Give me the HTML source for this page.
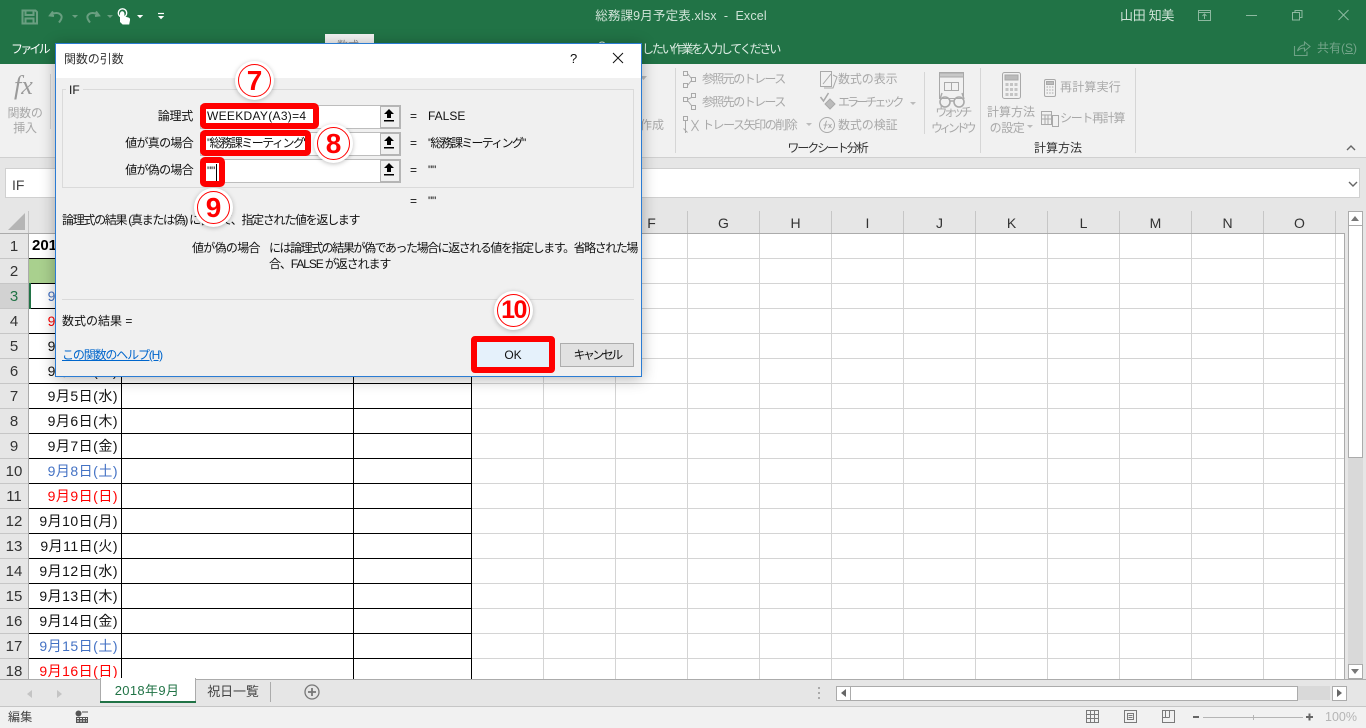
<!DOCTYPE html>
<html lang="ja"><head><meta charset="utf-8"><title>総務課9月予定表.xlsx - Excel</title>
<style>
html,body{margin:0;padding:0;width:1366px;height:728px;overflow:hidden;background:#fff}
body{position:relative;font-family:"Liberation Sans","Noto Sans CJK JP",sans-serif;font-size:12px;color:#222}
div,span.a{position:absolute}
.t{position:absolute;white-space:nowrap;line-height:16px;height:16px}
.g{color:#a8a8a8;font-size:12px;letter-spacing:-.3px}
.w{color:#dfeee5;letter-spacing:-.5px}
.c{text-align:center;transform:translateX(-50%)}
.r{text-align:right;transform:translateX(-100%)}
.h{position:absolute;top:211px;height:22px;line-height:24px;width:72px;text-align:center;font-size:14px;color:#333;border-right:1px solid #c6c6c6;box-sizing:border-box}
.n{position:absolute;left:0;width:28px;height:25px;line-height:25px;text-align:center;font-size:15px;color:#333;border-bottom:1px solid #c6c6c6;box-sizing:border-box;background:#e6e6e6}
.d{position:absolute;width:108px;left:10px;height:24px;line-height:25px;text-align:right;font-size:14px;letter-spacing:.5px;color:#111;white-space:nowrap}
.bl{color:#4472c4}.rd{color:#f00}
.lab{position:absolute;white-space:nowrap;line-height:16px;font-size:12px;color:#111;letter-spacing:-.25px}
.inp{position:absolute;left:200px;width:198px;height:22px;background:#fff;border:1px solid #bdbdbd;box-sizing:content-box}
.ref{position:absolute;left:380px;width:18px;height:20px;background:#f0f0f0;border:2px solid #b5b5b5;border-width:2px 2px 2px 1px;box-sizing:content-box}
.hl{position:absolute;left:200px;background:#fff;border:6px solid #f00;border-radius:5px;box-sizing:border-box;overflow:hidden}
.hl span{position:absolute;left:1px;white-space:nowrap;font-size:12px;line-height:16px;color:#111;letter-spacing:-.25px}
.circ{position:absolute;width:31px;height:31px;border-radius:50%;background:#fff;border:1.500px solid #f00;box-shadow:0 0 0 3px #fff,0 1px 5px 3px rgba(0,0,0,.25);text-align:center;color:#f00;font-weight:700;font-size:28px;line-height:31px;box-sizing:content-box}
svg{position:absolute;overflow:visible}
</style></head><body>

<!-- title bar -->
<div style="left:0;top:0;width:1366px;height:64px;background:#217346"></div>
<svg style="left:0;top:0" width="340" height="32" fill="none">
 <g stroke="#6a9f81" stroke-width="2">
  <path d="M22.500 10.500h13l1.500 1.500v11.500h-14.500z"/><path d="M25.500 10.500v4.500h8v-4.500M25.500 23.500v-5h8v5"/>
  <path d="M53 11.500l-3 4 4 .5M50.500 16c3-4 9-4 11 0 .8 2-.5 4-2.500 6.500"/>
  <path d="M96 11.500l3 4-4 .5M98.500 16c-3-4-9-4-11 0-.8 2 .5 4 2.500 6.500"/>
 </g>
 <path d="M72 15l3 3 3-3zM107 15l3 3 3-3z" fill="#6a9f81"/>
 <path d="M120 22v-8.500a2.200 2.200 0 0 1 4.400 0v3l4 1c1.500 .4 1.800 1.400 1.600 2.800l-.8 4.200h-6.600z" fill="#fff"/>
 <circle cx="122.500" cy="13" r="4.200" stroke="#fff" stroke-width="1.400"/>
 <path d="M137 15l3 3.200 3.200-3.200z" fill="#fff"/>
 <path d="M158 13.500h6" stroke="#fff" stroke-width="1.200"/><path d="M158 16l3 3.200 3.200-3.200z" fill="#fff"/>
</svg>
<div class="t w c" style="left:681px;top:8px;font-size:12.500px;letter-spacing:.15px;color:#cfe3d7">総務課9月予定表.xlsx&nbsp; - &nbsp;Excel</div>
<div class="t" style="left:1120px;top:8px;font-size:13px;letter-spacing:-.3px;color:#cfe3d7">山田 知美</div>
<svg style="left:1190px;top:0" width="176" height="64" fill="none" stroke="#8db9a0" stroke-width="1">
 <path d="M8.500 10.500h12v10h-12zM8.500 12.500h12M14.500 19v-5M12.500 16l2-2 2 2"/>
 <path d="M56 15.500h11"/>
 <path d="M102.500 12.500h7v7.500h-7zM105 12.500v-2h7v7h-2.500"/>
 <path d="M148.500 10l10 10M158.500 10l-10 10"/>
</svg>
<div class="t w" style="left:11px;top:41px;font-size:12px;color:#fff;letter-spacing:-2.800px">ファイル</div>
<div style="left:325px;top:34px;width:49px;height:30px;background:#f1f1f1"></div>
<div class="t" style="left:337px;top:38px;color:#888;font-size:11px">数式</div>
<svg style="left:595px;top:40px" width="14" height="14" fill="none" stroke="#cfe3d7"><circle cx="7" cy="5.500" r="3.500"/><path d="M5.500 10.500h3"/></svg>
<div class="t w" style="left:642px;top:41px;font-size:12px;letter-spacing:-2.150px">したい作業を入力してください</div>
<svg style="left:1293px;top:40px" width="18" height="17" fill="none" stroke="#6fa286" stroke-width="1.100"><path d="M1.500 6v9.500h12.500v-4M4.500 11c1-4 4-6 7-6V2l5.500 4.500-5.500 4.500V8c-3 0-5 .5-7 3z"/></svg>
<div class="t" style="left:1317px;top:40px;font-size:12px;color:#74a58a">共有(<u>S</u>)</div>

<!-- ribbon -->
<div style="left:0;top:64px;width:1366px;height:93px;background:#f1f1f1;border-bottom:1px solid #d0d0d0;box-sizing:content-box"></div>
<div class="t" style="left:14px;top:71px;font:italic 26px/30px 'Liberation Serif',serif;color:#9a9a9a">fx</div>
<div class="t g c" style="left:25px;top:105px">関数の</div>
<div class="t g c" style="left:25px;top:120px">挿入</div>
<div style="left:50px;top:74px;width:1px;height:55px;background:#d6d6d6"></div>
<div class="t g" style="left:640px;top:117px;letter-spacing:0">作成</div>
<svg style="left:640px;top:76px" width="8" height="5"><path d="M0 0h7l-3.500 4z" fill="#bbb"/></svg>
<div style="left:675px;top:68px;width:1px;height:85px;background:#d6d6d6"></div>
<div style="left:924px;top:72px;width:1px;height:62px;background:#d6d6d6"></div>
<div style="left:980px;top:68px;width:1px;height:85px;background:#d6d6d6"></div>
<div style="left:1135px;top:68px;width:1px;height:85px;background:#d6d6d6"></div>

<svg style="left:680px;top:68px" width="470" height="80" fill="none" stroke="#a9a9a9" stroke-width="1">
 <path d="M3.500 3.500h4v4h-4zM3.500 15.500h4v4h-4zM11.500 9.500h4v4h-4zM7.500 5.500l4 5M7.500 17.500l4-5"/>
 <path d="M3.500 29.500h4v4h-4zM11.500 25.500h4v4h-4zM11.500 37.500h4v4h-4zM7.500 31.500l4-2M7.500 32.500l4 5"/>
 <path d="M3.500 48.500h4v4h-4zM3.500 60.500l4 4M11.500 52l7 11M18.500 52l-7 11M5.500 53v12"/>
 <path d="M140.500 3.500h11v15h-11zM143 16l8-10M153 7l4 2-4 11h-9"/>
 <path d="M140.500 29l3 4 5-8" stroke-width="1.500"/><path d="M150 31l5 5-5 5-5-5z" fill="#bbb"/>
 <circle cx="147" cy="57" r="7.500"/><path d="M144 61c2 0 1-8 3-8M143.500 57h4M148.500 56l3 4M151.500 56l-3 4"/>
 <path d="M259.500 4.500h24v26h-24z"/><path d="M259.500 5h24v4h-24z" fill="#c8c8c8"/><path d="M264.500 14.500h14v8h-14zM271.500 14.500v8"/>
 <circle cx="265" cy="34" r="5" stroke-width="1.600"/><circle cx="279" cy="34" r="5" stroke-width="1.600"/><path d="M270 33h4M260 31l2-6M284 31l-2-6" stroke-width="1.400"/>
 <rect x="322.500" y="4.500" width="18" height="26" rx="2"/><path d="M325 7h13v5h-13z" fill="#bbb"/>
 <path d="M325.500 15h3v3h-3zM330 15h3v3h-3zM334.500 15h3v3h-3zM325.500 20h3v3h-3zM330 20h3v3h-3zM334.500 20h3v3h-3zM325.500 25h3v3h-3zM330 25h3v3h-3zM334.500 25h3v3h-3z" fill="#c4c4c4" stroke="none"/>
 <rect x="364.500" y="11.500" width="11" height="17" rx="1.500"/><path d="M366.500 13.500h7v3h-7z" fill="#bbb"/><path d="M366.500 19h7M366.500 22h7M366.500 25h7" stroke-dasharray="1.500 1.200"/>
 <path d="M361.500 43.500h10v13h-10zM361.500 47h10M361.500 51h10M365 47v9M368 47v9"/><rect x="372.500" y="47.500" width="6" height="11"/>
</svg>
<div class="t g" style="left:702px;top:71px;letter-spacing:-1.600px">参照元のトレース</div>
<div class="t g" style="left:702px;top:94px;letter-spacing:-1.600px">参照先のトレース</div>
<div class="t g" style="left:702px;top:117px;letter-spacing:-1.450px">トレース矢印の削除</div>
<div class="t g" style="left:838px;top:71px;letter-spacing:-.1px">数式の表示</div>
<div class="t g" style="left:838px;top:94px;letter-spacing:-3px">エラー チェック</div>
<div class="t g" style="left:838px;top:117px;letter-spacing:-.1px">数式の検証</div>
<svg style="left:806px;top:100px" width="120" height="30"><path d="M0 23h6l-3 3zM104 2h6l-3 3z" fill="#bbb"/></svg>
<div class="t g c" style="left:952px;top:104px;letter-spacing:-3.600px">ウォッチ</div>
<div class="t g c" style="left:952px;top:120px;letter-spacing:-3.600px">ウィンドウ</div>
<div class="t g c" style="left:1011px;top:104px;letter-spacing:0">計算方法</div>
<div class="t g c" style="left:1007px;top:120px;letter-spacing:-.4px">の設定</div>
<svg style="left:1027px;top:125px" width="8" height="5"><path d="M0 0h6l-3 3z" fill="#bbb"/></svg>
<div class="t g" style="left:1060px;top:79px;letter-spacing:.2px">再計算実行</div>
<div class="t g" style="left:1060px;top:110px;letter-spacing:-1.300px">シート再計算</div>
<div class="t c" style="left:827px;top:140px;color:#333;letter-spacing:-2.100px">ワークシート分析</div>
<div class="t c" style="left:1058px;top:140px;color:#333;letter-spacing:0">計算方法</div>
<svg style="left:1346px;top:145px" width="10" height="7" fill="none" stroke="#666" stroke-width="1.400"><path d="M1 5l4-4 4 4"/></svg>

<!-- formula bar -->
<div style="left:0;top:158px;width:1366px;height:53px;background:#e6e6e6"></div>
<div style="left:5px;top:168px;width:1355px;height:30px;background:#fff;border:1px solid #d0d0d0;box-sizing:border-box"></div>
<div class="t" style="left:12px;top:177px;font-size:14px;color:#444">IF</div>
<svg style="left:1348px;top:181px" width="10" height="6" fill="none" stroke="#666" stroke-width="1.400"><path d="M1 1l4 4 4-4"/></svg>

<!-- column header -->
<div style="left:0;top:205px;width:1345px;height:29px;background:#e6e6e6"></div>
<div style="left:0;top:211px;width:28px;height:22px;background:#e6e6e6;border-right:1px solid #c6c6c6"></div>
<svg style="left:8px;top:213px" width="18" height="18"><path d="M17 0v17H0z" fill="#b5b5b5"/></svg>
<div class="h" style="left:616px">F</div><div class="h" style="left:688px">G</div><div class="h" style="left:760px">H</div><div class="h" style="left:832px">I</div><div class="h" style="left:904px">J</div><div class="h" style="left:976px">K</div><div class="h" style="left:1048px">L</div><div class="h" style="left:1120px">M</div><div class="h" style="left:1192px">N</div><div class="h" style="left:1264px">O</div>
<div style="left:0;top:233px;width:1345px;height:1px;background:#ababab"></div>

<!-- grid -->
<div style="left:29px;top:234px;width:1315px;height:445px;background-color:#fff;background-image:repeating-linear-gradient(to bottom,transparent 0,transparent 24px,#d4d4d4 24px,#d4d4d4 25px)"></div>
<svg style="left:0;top:234px" width="1345" height="445">
 <g stroke="#d4d4d4"><path d="M471.500 0v445M543.500 0v445M615.500 0v445M687.500 0v445M759.500 0v445M831.500 0v445M903.500 0v445M975.500 0v445M1047.500 0v445M1119.500 0v445M1191.500 0v445M1263.500 0v445M1335.500 0v445"/></g>
 <path d="M1344.500 0v445" stroke="#ababab"/>
</svg>
<div style="left:29px;top:259px;width:442px;height:24px;background:#a9d08e"></div>
<svg style="left:0;top:234px" width="480" height="445" stroke="#000" stroke-width="1">
 <path d="M29 24.500h443M29 49.500h443M29 74.500h443M29 99.500h443M29 124.500h443M29 149.500h443M29 174.500h443M29 199.500h443M29 224.500h443M29 249.500h443M29 274.500h443M29 299.500h443M29 324.500h443M29 349.500h443M29 374.500h443M29 399.500h443M29 424.500h443"/>
 <path d="M121.500 24v421M353.500 24v421M471.500 24v421"/>
</svg>
<div style="left:28px;top:283px;width:3px;height:26px;background:#217346"></div>
<div class="t" style="left:32px;top:238px;font-size:15px;font-weight:700;color:#000">2018年9月</div>

<!-- row headers -->
<div class="n" style="top:234px">1</div><div class="n" style="top:259px">2</div><div class="n" style="top:284px;background:#d2d2d2;color:#217346">3</div><div class="n" style="top:309px">4</div><div class="n" style="top:334px">5</div><div class="n" style="top:359px">6</div><div class="n" style="top:384px">7</div><div class="n" style="top:409px">8</div><div class="n" style="top:434px">9</div><div class="n" style="top:459px">10</div><div class="n" style="top:484px">11</div><div class="n" style="top:509px">12</div><div class="n" style="top:534px">13</div><div class="n" style="top:559px">14</div><div class="n" style="top:584px">15</div><div class="n" style="top:609px">16</div><div class="n" style="top:634px">17</div><div class="n" style="top:659px;height:20px;border:0">18</div>
<div style="left:28px;top:234px;width:1px;height:445px;background:#ababab"></div>

<!-- dates -->
<div class="d bl" style="top:284px">9月1日(土)</div>
<div class="d rd" style="top:309px">9月2日(日)</div>
<div class="d" style="top:334px">9月3日(月)</div>
<div class="d" style="top:359px">9月4日(火)</div>
<div class="d" style="top:384px">9月5日(水)</div>
<div class="d" style="top:409px">9月6日(木)</div>
<div class="d" style="top:434px">9月7日(金)</div>
<div class="d bl" style="top:459px">9月8日(土)</div>
<div class="d rd" style="top:484px">9月9日(日)</div>
<div class="d" style="top:509px">9月10日(月)</div>
<div class="d" style="top:534px">9月11日(火)</div>
<div class="d" style="top:559px">9月12日(水)</div>
<div class="d" style="top:584px">9月13日(木)</div>
<div class="d" style="top:609px">9月14日(金)</div>
<div class="d bl" style="top:634px">9月15日(土)</div>
<div class="d rd" style="top:659px;height:20px;overflow:hidden">9月16日(日)</div>

<!-- right scrollbar -->
<div style="left:1345px;top:205px;width:21px;height:474px;background:#e6e6e6"></div>
<div style="left:1348px;top:211px;width:15px;height:468px;background:#d9d9d9"></div>
<div style="left:1348px;top:211px;width:15px;height:15px;background:#fff;border:1px solid #ababab;box-sizing:border-box"></div>
<svg style="left:1351px;top:216px" width="9" height="5"><path d="M0 5h8L4 0z" fill="#777"/></svg>
<div style="left:1348px;top:225px;width:15px;height:233px;background:#fff;border:1px solid #ababab;box-sizing:border-box"></div>
<div style="left:1348px;top:664px;width:15px;height:15px;background:#fff;border:1px solid #ababab;box-sizing:border-box"></div>
<svg style="left:1351px;top:669px" width="9" height="5"><path d="M0 0h8L4 5z" fill="#777"/></svg>

<!-- sheet tabs -->
<div style="left:0;top:679px;width:1366px;height:27px;background:#e6e6e6;border-top:1px solid #ababab;box-sizing:border-box"></div>
<svg style="left:26px;top:690px" width="36" height="9"><path d="M6 0v8L1 4zM31 0v8l5-4z" fill="#c4c4c4"/></svg>
<div style="left:100px;top:678px;width:96px;height:25px;background:#fff;border:1px solid #ababab;border-top:0;border-bottom:0;box-sizing:border-box"></div>
<div style="left:100px;top:701px;width:96px;height:2px;background:#217346"></div>
<div class="t c" style="left:147px;top:683px;font-size:13px;color:#217346;letter-spacing:.35px">2018年9月</div>
<div class="t c" style="left:233px;top:684px;font-size:13px;color:#444;letter-spacing:-.1px">祝日一覧</div>
<div style="left:270px;top:682px;width:1px;height:20px;background:#ababab"></div>
<svg style="left:304px;top:684px" width="16" height="16" fill="none" stroke="#777" stroke-width="1.300"><circle cx="8" cy="8" r="7"/><path d="M8 4v8M4 8h8" stroke-width="1.800"/></svg>
<svg style="left:818px;top:687px" width="4" height="14"><path d="M0 0h2v2H0zM0 5h2v2H0zM0 10h2v2H0z" fill="#aaa"/></svg>
<div style="left:836px;top:686px;width:494px;height:14px;background:#d9d9d9"></div>
<div style="left:836px;top:686px;width:15px;height:15px;background:#fff;border:1px solid #ababab;box-sizing:border-box"></div>
<svg style="left:841px;top:689px" width="5" height="9"><path d="M5 0v8L0 4z" fill="#666"/></svg>
<div style="left:850px;top:686px;width:448px;height:15px;background:#fff;border:1px solid #ababab;box-sizing:border-box"></div>
<div style="left:1332px;top:686px;width:15px;height:15px;background:#fff;border:1px solid #ababab;box-sizing:border-box"></div>
<svg style="left:1337px;top:689px" width="5" height="9"><path d="M0 0v8l5-4z" fill="#666"/></svg>

<!-- status bar -->
<div style="left:0;top:706px;width:1366px;height:22px;background:#f1f1f1;border-top:1px solid #c6c6c6;box-sizing:border-box"></div>
<div class="t" style="left:8px;top:709px;color:#444;letter-spacing:.3px">編集</div>
<svg style="left:75px;top:710px" width="14" height="14" fill="#555"><circle cx="3.500" cy="3.500" r="3"/><path d="M7 1.500h6v1H7zM1 7h12v6H1zm1 1v1h2V8zm3 0v1h2V8zm3 0v1h2V8zm3 0v1h1V8zM2 10.500v1h2v-1zm3 0v1h2v-1zm3 0v1h2v-1zm3 0v1h1v-1z" fill-rule="evenodd"/></svg>
<svg style="left:1085px;top:710px" width="240" height="14" fill="none" stroke="#7a7a7a">
 <path d="M1.500 .5h12v12h-12zM1.500 4.500h12M1.500 8.500h12M5.500 .5v12M9.500 .5v12"/>
 <path d="M39.500 .5h12v12h-12z" stroke-width="1"/><path d="M42.500 3.500h6v6h-6zM43.500 5.500h4M43.500 7.500h4"/>
 <path d="M77.500 .5h12v12h-12zM77.500 7.500h7M80.500 .5v7M84.500 .5v7"/>
 <path d="M108 7h6" stroke="#666" stroke-width="2"/>
 <path d="M118 7.500h100" stroke="#b5b5b5"/><path d="M168.500 5v5" stroke="#b5b5b5"/>
 <path d="M221 7h7M224.500 3.500v7" stroke="#666" stroke-width="2"/>
</svg>
<div class="t" style="left:1325px;top:709px;color:#b5b5b5;font-size:12.500px">100%</div>

<!-- dialog -->
<div style="left:55px;top:43px;width:587px;height:334px;background:#f0f0f0;border:1px solid #2b7cd3;box-sizing:border-box;box-shadow:0 2px 14px rgba(0,0,0,.3)"></div>
<div style="left:56px;top:44px;width:585px;height:34px;background:#fff"></div>
<div class="t" style="left:64px;top:51px;font-size:12px;letter-spacing:-.1px;color:#333">関数の引数</div>
<div class="t" style="left:570px;top:51px;font-size:13px;color:#111">?</div>
<svg style="left:612px;top:52px" width="12" height="12" stroke="#111" stroke-width="1"><path d="M1 1l10 10M11 1L1 11"/></svg>
<div style="left:62px;top:89px;width:572px;height:99px;border:1px solid #dadada;box-sizing:border-box"></div>
<div class="lab" style="left:66px;top:82px;background:#f0f0f0;padding:0 3px;letter-spacing:0">IF</div>
<div class="lab r" style="left:193px;top:108px">論理式</div>
<div class="lab r" style="left:193px;top:135px;letter-spacing:-.7px">値が真の場合</div>
<div class="lab r" style="left:193px;top:162px;letter-spacing:-.7px">値が偽の場合</div>

<div class="inp" style="top:105px"></div><div class="inp" style="top:132px"></div><div class="inp" style="top:159px"></div>
<div class="ref" style="top:105px"></div><div class="ref" style="top:132px"></div><div class="ref" style="top:159px"></div>
<svg style="left:383px;top:109px" width="12" height="68" fill="#000"><path d="M6 0l5 5H8v4H4V5H1zM1 11h10v1.500H1zM6 27l5 5H8v4H4v-4H1zM1 38h10v1.500H1zM6 54l5 5H8v4H4v-4H1zM1 65h10v1.500H1z"/></svg>

<div class="hl" style="top:103px;width:119px;height:26px"><span style="top:-1px;letter-spacing:.3px">WEEKDAY(A3)=4</span></div>
<div class="hl" style="top:130px;width:111px;height:26px"><span style="top:-1px;letter-spacing:-1.500px">"総務課ミーティング"</span></div>
<div class="hl" style="top:157px;width:25px;height:30px"><span style="top:0">""</span><div style="left:10px;top:1px;width:1px;height:17px;background:#000"></div></div>

<div class="lab" style="left:410px;top:108px">=</div><div class="lab" style="left:428px;top:108px;letter-spacing:0">FALSE</div>
<div class="lab" style="left:410px;top:135px">=</div><div class="lab" style="left:428px;top:135px;letter-spacing:-1.750px">"総務課ミーティング"</div>
<div class="lab" style="left:410px;top:162px">=</div><div class="lab" style="left:428px;top:162px">""</div>
<div class="lab" style="left:410px;top:193px">=</div><div class="lab" style="left:428px;top:193px">""</div>
<div class="lab" style="left:62px;top:212px;letter-spacing:-1.300px">論理式の結果 (真または偽) に従って、指定された値を返します</div>
<div class="lab" style="left:192px;top:240px;letter-spacing:-.7px">値が偽の場合</div>
<div class="lab" style="left:269px;top:240px;letter-spacing:-1.450px">には論理式の結果が偽であった場合に返される値を指定します。省略された場</div>
<div class="lab" style="left:269px;top:256px;letter-spacing:-1.100px">合、FALSE が返されます</div>
<div style="left:62px;top:299px;width:572px;height:1px;background:#dadada"></div>
<div class="lab" style="left:62px;top:313px;letter-spacing:0">数式の結果 =</div>
<div class="lab" style="left:62px;top:347px;color:#0066cc;text-decoration:underline;letter-spacing:-1.150px">この関数のヘルプ(H)</div>
<div style="left:471px;top:336px;width:84px;height:37px;background:#e5f1fb;border:6px solid #f00;border-radius:4px;box-sizing:border-box"></div>
<div class="lab c" style="left:513px;top:347px;letter-spacing:0">OK</div>
<div style="left:560px;top:343px;width:74px;height:24px;background:#e1e1e1;border:1px solid #adadad;box-sizing:border-box"></div>
<div class="lab c" style="left:597px;top:347px;letter-spacing:-2.600px">キャンセル</div>

<!-- callouts -->
<div class="circ" style="left:238px;top:64px">7</div>
<div class="circ" style="left:317px;top:127px">8</div>
<div class="circ" style="left:197px;top:191px">9</div>
<div class="circ" style="left:497px;top:294px;font-size:25px;letter-spacing:-1.500px">10</div>
</body></html>
